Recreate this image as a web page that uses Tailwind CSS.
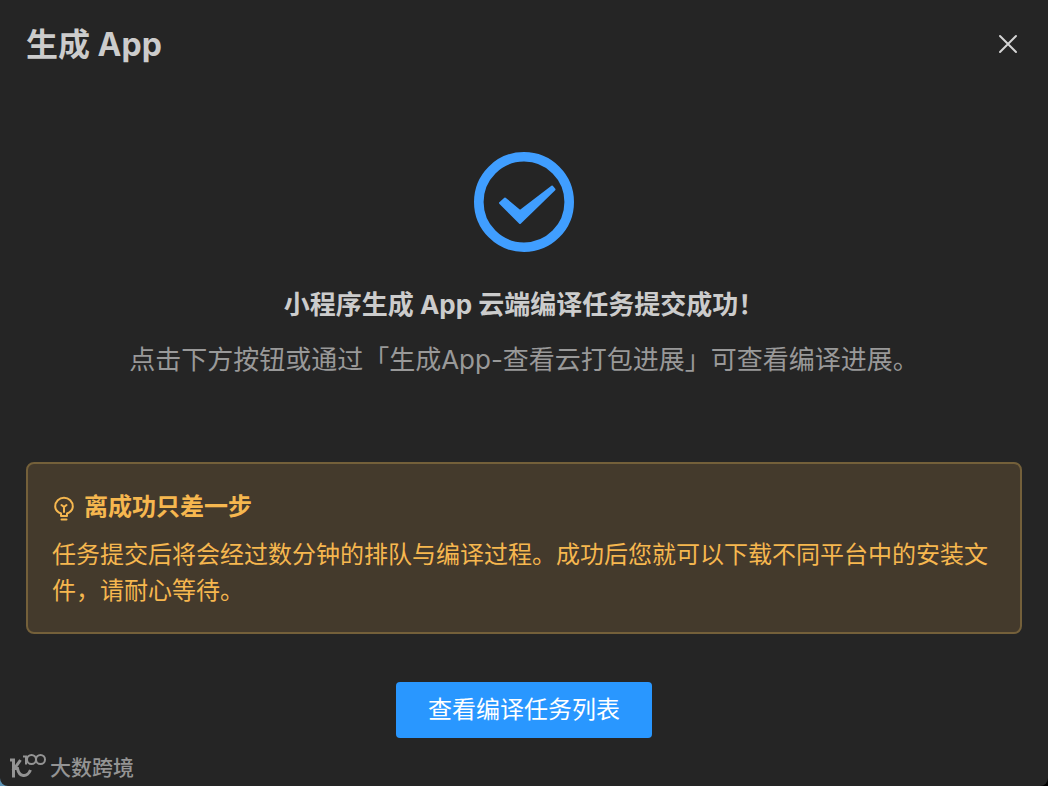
<!DOCTYPE html>
<html lang="zh-CN">
<head>
<meta charset="utf-8">
<meta name="viewport" content="width=device-width, initial-scale=1">
<title>生成 App</title>
<script src="https://cdn.jsdelivr.net/npm/@tailwindcss/browser@4"></script>
</head>
<body class="min-h-screen bg-linear-to-r from-[#5d93b5] to-black font-['Inter','Noto_Sans_CJK_SC',sans-serif]">
<main class="relative flex min-h-screen flex-col rounded-b-lg bg-[#252525] px-[26px]">
  <header class="flex h-[88px] items-center justify-between">
    <h1 class="pt-0.5 text-[32px] leading-10 font-bold text-[#cccccc]">生成 App</h1>
    <button type="button" aria-label="关闭" class="flex size-7 items-center justify-center text-[#d4d4d4]">
      <svg class="size-5" viewBox="0 0 20 20" fill="none" stroke="currentColor" stroke-width="2" stroke-linecap="round"><path d="M2 2l16 16M18 2L2 18"/></svg>
    </button>
  </header>

  <section class="flex flex-col items-center pt-16 text-center">
    <svg class="size-[100px]" viewBox="0 0 100 100" aria-hidden="true">
      <circle cx="50" cy="50" r="45.2" fill="none" stroke="#409eff" stroke-width="9.6"/>
      <path fill="#409eff" stroke="#409eff" stroke-width="2" stroke-linejoin="round" d="M26 51L31 46.500L46 59L78 34.500L80.500 37.500L46 71Z"/>
    </svg>
    <h2 class="mt-8 text-[26px] leading-[42px] font-bold text-[#cccccc]">小程序生成 App 云端编译任务提交成功！</h2>
    <p class="mt-3.5 text-[26px] leading-10 text-[#999999]">点击下方按钮或通过「生成App-查看云打包进展」可查看编译进展。</p>
  </section>

  <section class="mt-[82px] rounded-lg border-2 border-[#74603a] bg-[#443a2c] px-6 pt-[25px] pb-[23px] text-2xl leading-9 text-[#f6b74f]">
    <h3 class="flex items-center gap-2 font-bold">
      <svg class="size-6 overflow-visible" viewBox="0 0 24 24" fill="none" stroke="currentColor" stroke-width="2" stroke-linecap="round" stroke-linejoin="round" aria-hidden="true"><path d="M9 21v-2.500C5.500 17 3.200 14.500 3.200 11.500a8.800 8.800 0 0 1 17.600 0c0 3-2.300 5.500-5.800 7V21zM12 17v-5M9.500 10l2.500 2 2.500-2M9.500 24.500h5"/></svg>
      离成功只差一步
    </h3>
    <p class="mt-3">任务提交后将会经过数分钟的排队与编译过程。成功后您就可以下载不同平台中的安装文件，请耐心等待。</p>
  </section>

  <button type="button" class="mt-12 h-14 self-center rounded bg-[#2997ff] px-8 text-2xl text-white">查看编译任务列表</button>

  <div class="absolute bottom-1 left-2 flex items-center gap-1 text-[#949494]">
    <svg class="h-7 w-[38px]" viewBox="0 0 38 28" fill="none" stroke="currentColor" aria-hidden="true">
      <path stroke-width="3" d="M2 6h3.500V23.500M12.500 6L6.500 14.500H9.500C11 23 19 24 22.500 16"/>
      <path stroke-width="2" d="M15 2.500h3v8"/><circle cx="23.500" cy="5.500" r="4.500" stroke-width="2"/><circle cx="32.500" cy="5.500" r="4.500" stroke-width="2"/>
    </svg>
    <span class="text-[21px] leading-7 font-medium">大数跨境</span>
  </div>
</main>
</body>
</html>
